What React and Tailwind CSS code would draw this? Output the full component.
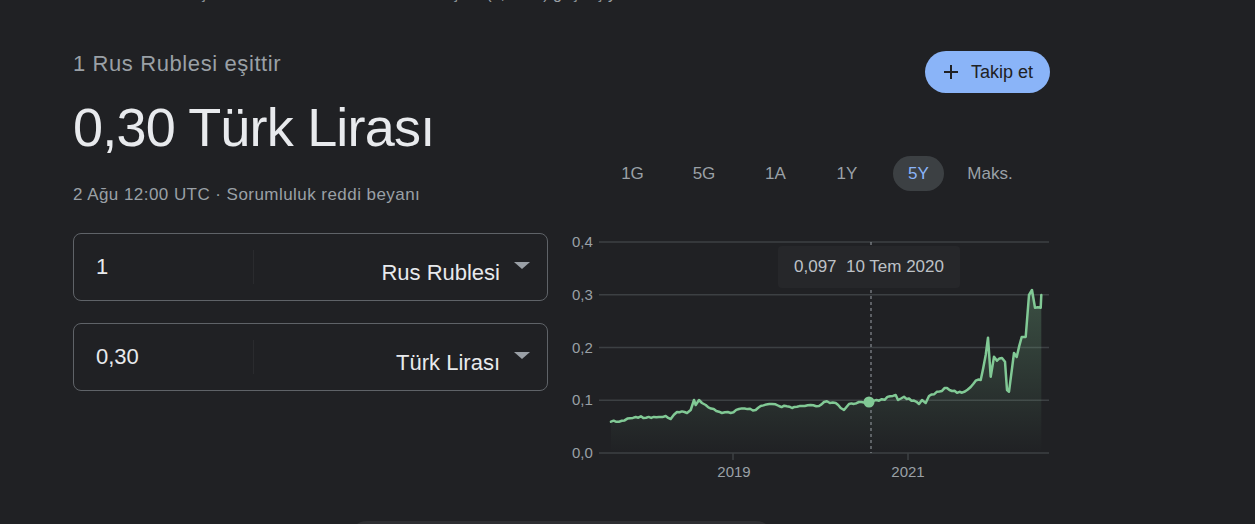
import React from "react"

const LINE = [
  [612, 421.7], [620, 421.7], [636.7, 417], [660, 417], [666.7, 416], [671.7, 419],
  [678, 412], [688, 413], [691.7, 410], [695, 400], [696.7, 405], [700, 400],
  [703, 403], [706.7, 405], [720, 411.7], [731.7, 413], [740, 409], [756.7, 410],
  [761.7, 406], [773, 404], [780, 406], [793, 408], [803, 406], [820, 406],
  [825, 402], [836.7, 403], [841.7, 408], [845, 410], [850, 404], [860, 402],
  [870, 402], [880, 400.7], [896.7, 395], [899, 400], [905, 396.7], [920, 404],
  [923, 400], [926.7, 403], [930, 396], [938, 391.7], [948, 388], [953, 391],
  [963, 392.7], [971.7, 387], [976.7, 380.7], [981.7, 380], [986.7, 355],
  [989, 337.7], [991.7, 376.7], [995, 356.7], [998, 360.7], [1003, 358],
  [1006, 361.7], [1008, 390], [1010, 391.7], [1015, 353], [1017.7, 357],
  [1022.7, 337], [1026.7, 337], [1030, 295], [1033, 290], [1036, 307.7],
  [1041.7, 307.7], [1042.3, 295]
]

// a little noise so the line looks like daily data
function densify(line) {
  const out = []
  let k = 0
  for (let i = 0; i < line.length - 1; i++) {
    const [x1, y1] = line[i]
    const [x2, y2] = line[i + 1]
    const steps = Math.max(1, Math.floor((x2 - x1) / 2.5))
    for (let s = 0; s < steps; s++) {
      const t = s / steps
      const r = Math.sin(++k * 12.9898) * 43758.5453
      const j = s === 0 ? 0 : ((r - Math.floor(r)) - 0.5) * 2.2
      out.push([x1 + (x2 - x1) * t, y1 + (y2 - y1) * t + j])
    }
  }
  out.push(line[line.length - 1])
  return out
}

const RANGES = ["1G", "5G", "1A", "1Y", "5Y", "Maks."]
const Y_TICKS = [
  { label: "0,4", y: 242 },
  { label: "0,3", y: 294.75 },
  { label: "0,2", y: 347.5 },
  { label: "0,1", y: 400.25 },
  { label: "0,0", y: 453 }
]

function Chart() {
  const pts = densify(LINE).map(p => `${p[0].toFixed(1)},${p[1].toFixed(1)}`).join(" ")
  const area = `612,453 ${pts} 1042.3,453`
  return (
    <div className="relative w-[490px] h-[250px] mt-[39px]">
      <svg width="490" height="250" viewBox="560 230 490 250" className="block">
        <defs>
          <linearGradient id="fillg" x1="0" y1="0" x2="0" y2="1">
            <stop offset="0%" stopColor="#81c995" stopOpacity="0.28" />
            <stop offset="100%" stopColor="#81c995" stopOpacity="0" />
          </linearGradient>
        </defs>
        {Y_TICKS.map(t => (
          <g key={t.label}>
            <line x1="600" x2="1050" y1={t.y} y2={t.y} stroke="#3c4043" strokeWidth="1.5" />
            <text x="573" y={t.y + 5} fill="#9aa0a6" fontSize="15" fontFamily="Liberation Sans, Arial, sans-serif">{t.label}</text>
          </g>
        ))}
        <line x1="734" x2="734" y1="453" y2="460" stroke="#3c4043" strokeWidth="1.5" />
        <line x1="909" x2="909" y1="453" y2="460" stroke="#3c4043" strokeWidth="1.5" />
        <text x="735" y="477" textAnchor="middle" fill="#9aa0a6" fontSize="15" fontFamily="Liberation Sans, Arial, sans-serif">2019</text>
        <text x="909" y="477" textAnchor="middle" fill="#9aa0a6" fontSize="15" fontFamily="Liberation Sans, Arial, sans-serif">2021</text>
        <polygon points={area} fill="url(#fillg)" />
        <line x1="872" x2="872" y1="242" y2="453" stroke="#9aa0a6" strokeWidth="1" strokeDasharray="3 3" />
        <polyline points={pts} fill="none" stroke="#81c995" strokeWidth="2.5" strokeLinejoin="round" strokeLinecap="round" />
        <circle cx="870" cy="402" r="5.5" fill="#81c995" />
      </svg>
      <div className="absolute left-[219px] top-[16px] w-[182px] h-[42px] rounded bg-[#26272a] flex items-center justify-center text-[17px] text-[#bdc1c6] whitespace-pre">
        0,097  10 Tem 2020
      </div>
    </div>
  )
}

function CurrencyBox({ value, currency }) {
  return (
    <div className="h-[68px] rounded-lg border border-[#5f6368] flex items-stretch">
      <div className="w-[179px] pl-[22px] pb-[2px] flex items-center text-[22px] text-[#e8eaed]">
        {value}
      </div>
      <div className="my-[16px] w-px bg-[#2a2b2e]" />
      <div className="flex-1 flex items-center justify-end pr-[17px] pt-[10px]">
        <span className="text-[22px] text-[#e8eaed]">{currency}</span>
        <span className="ml-[14px] mb-[14px] w-0 h-0 border-l-[8px] border-r-[8px] border-t-[7px] border-l-transparent border-r-transparent border-t-[#9aa0a6]" />
      </div>
    </div>
  )
}

export default function App() {
  return (
    <div className="min-h-screen bg-[#202124] font-['Liberation_Sans',Arial,sans-serif] overflow-hidden">

      {/* heading scrolled mostly out of view */}
      <div className="h-[5px] overflow-hidden pl-[73px]">
        <div className="-mt-[16px] text-[16px] leading-[20px] text-[#9aa0a6] whitespace-nowrap">
          Rus Rublesi dönüştürücü · Türk Lirası kurları ve dönüşüm (₽, RUB) geçmiş yıllar
        </div>
      </div>

      <div className="flex pl-[73px] mt-[45px]">

        {/* Left column */}
        <div className="w-[475px]">
          <div className="text-[22px] leading-[28px] text-[#9aa0a6] tracking-[0.6px]">
            1 Rus Rublesi eşittir
          </div>
          <div className="mt-[19px] text-[54px] leading-[60px] text-[#e8eaed] tracking-[-0.8px]">
            0,30 Türk Lirası
          </div>
          <div className="mt-[28px] text-[17px] leading-[20px] text-[#9aa0a6] tracking-[0.45px]">
            2 Ağu 12:00 UTC · Sorumluluk reddi beyanı
          </div>
          <div className="mt-[28px] space-y-[22px]">
            <CurrencyBox value="1" currency="Rus Rublesi" />
            <CurrencyBox value="0,30" currency="Türk Lirası" />
          </div>
        </div>

        {/* Right column */}
        <div className="ml-[12px] w-[490px] flex flex-col">
          <div className="flex justify-end mt-px">
            <button className="h-[42px] pl-[18px] pr-[17px] rounded-full bg-[#8ab4f8] text-[#202124] flex items-center gap-[12px] text-[18px]">
              <svg width="16" height="16" viewBox="0 0 16 16">
                <path d="M8 1v14M1 8h14" stroke="#202124" strokeWidth="2" />
              </svg>
              Takip et
            </button>
          </div>

          <div className="mt-[63px] flex gap-[20.5px] pl-[47px]">
            {RANGES.map(r => (
              <div
                key={r}
                className={`w-[51px] h-[35px] rounded-full flex items-center justify-center text-[17px] ${
                  r === "5Y" ? "bg-[#3c4043] text-[#8ab4f8]" : "text-[#9aa0a6]"
                }`}
              >
                {r}
              </div>
            ))}
          </div>

          <div className="-ml-px">
            <Chart />
          </div>
        </div>

      </div>

      {/* next card peeking in at the bottom */}
      <div className="ml-[349px] mt-[41px] w-[425px] h-[40px] rounded-t-[18px] bg-[#2d2e31]" />

    </div>
  )
}
